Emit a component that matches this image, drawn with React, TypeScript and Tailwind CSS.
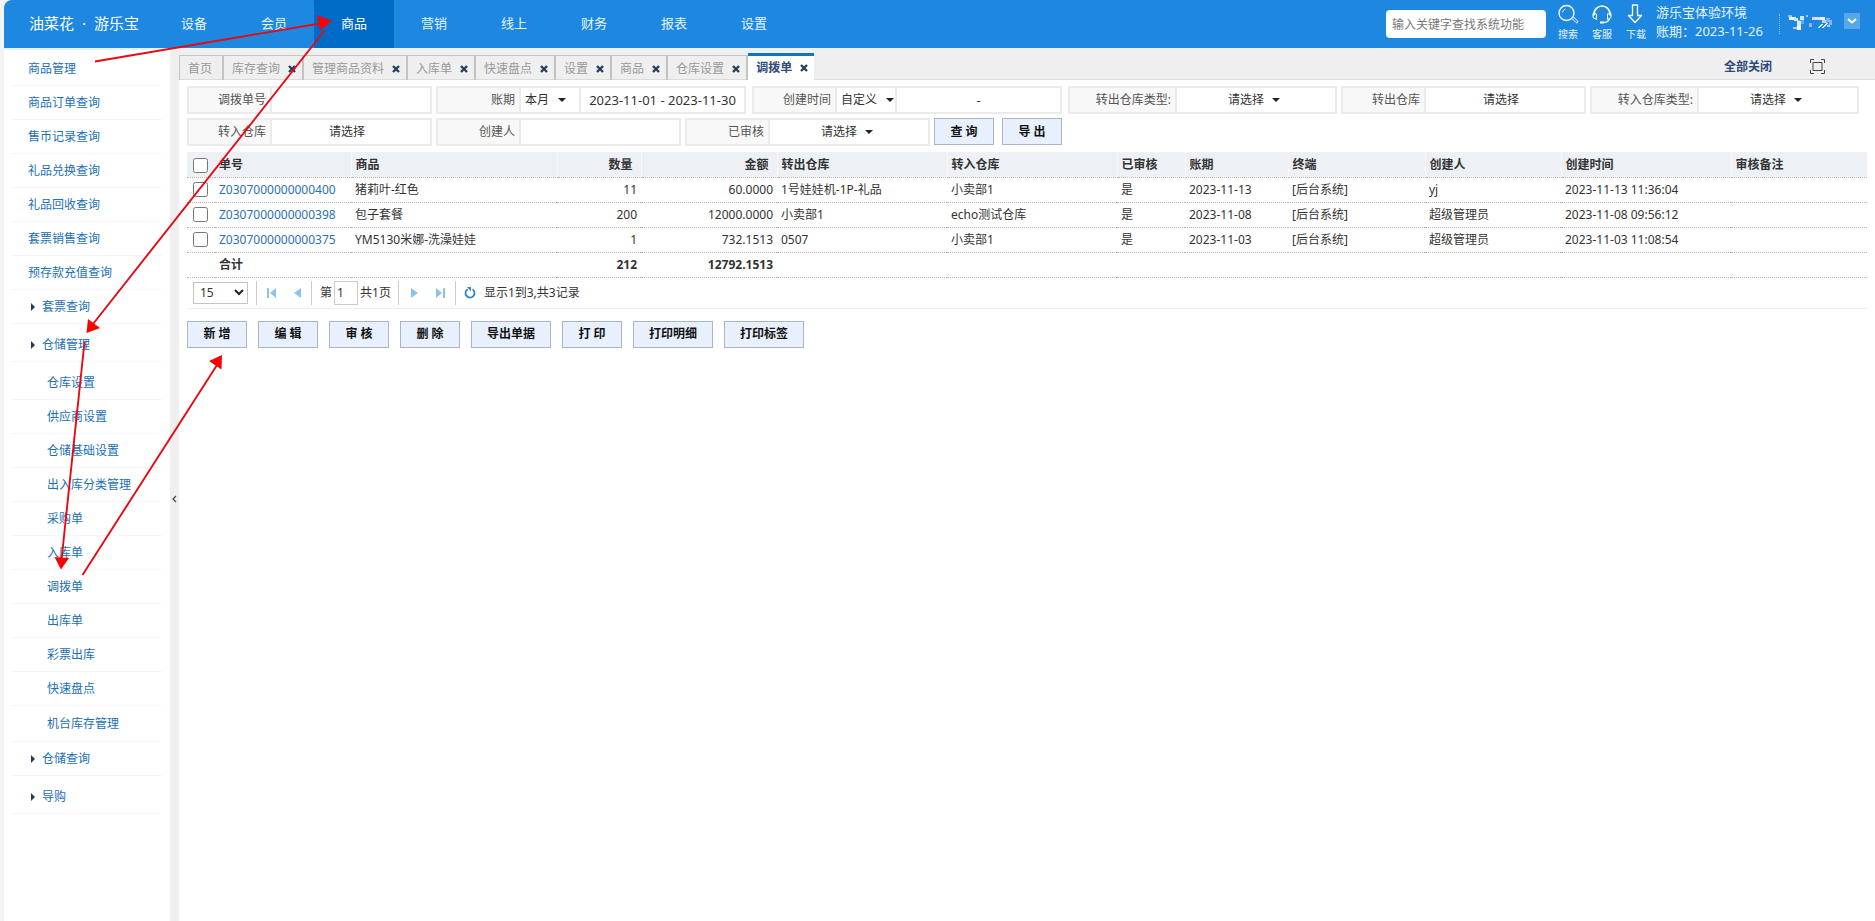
import { useState, type ReactNode } from 'react';
import { clsx } from 'clsx';

const NAV = ['设备', '会员', '商品', '营销', '线上', '财务', '报表', '设置'];

type MenuItem = { label: string; kind: 'top' | 'group' | 'child'; size?: 'tall' | 'mid' };

const MENU: MenuItem[] = [
  { label: '商品管理', kind: 'top' },
  { label: '商品订单查询', kind: 'top' },
  { label: '售币记录查询', kind: 'top' },
  { label: '礼品兑换查询', kind: 'top' },
  { label: '礼品回收查询', kind: 'top' },
  { label: '套票销售查询', kind: 'top' },
  { label: '预存款充值查询', kind: 'top' },
  { label: '套票查询', kind: 'group' },
  { label: '仓储管理', kind: 'group', size: 'tall' },
  { label: '仓库设置', kind: 'child', size: 'tall' },
  { label: '供应商设置', kind: 'child' },
  { label: '仓储基础设置', kind: 'child' },
  { label: '出入库分类管理', kind: 'child' },
  { label: '采购单', kind: 'child' },
  { label: '入库单', kind: 'child' },
  { label: '调拨单', kind: 'child' },
  { label: '出库单', kind: 'child' },
  { label: '彩票出库', kind: 'child' },
  { label: '快速盘点', kind: 'child' },
  { label: '机台库存管理', kind: 'child', size: 'mid' },
  { label: '仓储查询', kind: 'group' },
  { label: '导购', kind: 'group', size: 'tall' },
];

const TABS = ['首页', '库存查询', '管理商品资料', '入库单', '快速盘点', '设置', '商品', '仓库设置', '调拨单'];

const ROWS = [
  { id: 'Z0307000000000400', goods: '猪莉叶-红色', qty: '11', amount: '60.0000', from: '1号娃娃机-1P-礼品', to: '小卖部1', date: '2023-11-13', user: 'yj', time: '2023-11-13 11:36:04' },
  { id: 'Z0307000000000398', goods: '包子套餐', qty: '200', amount: '12000.0000', from: '小卖部1', to: 'echo测试仓库', date: '2023-11-08', user: '超级管理员', time: '2023-11-08 09:56:12' },
  { id: 'Z0307000000000375', goods: 'YM5130米娜-洗澡娃娃', qty: '1', amount: '732.1513', from: '0507', to: '小卖部1', date: '2023-11-03', user: '超级管理员', time: '2023-11-03 11:08:54' },
];

const ACTIONS = [
  { label: '新 增' },
  { label: '编 辑' },
  { label: '审 核' },
  { label: '删 除' },
  { label: '导出单据', wide: true },
  { label: '打 印' },
  { label: '打印明细', wide: true },
  { label: '打印标签', wide: true },
];

function Caret() {
  return (
    <svg width="8" height="4" viewBox="0 0 8 4" className="pointer-events-none shrink-0">
      <path d="M0 0h8L4 4z" fill="#222" />
    </svg>
  );
}

function CloseMark() {
  return (
    <svg width="8" height="8" viewBox="0 0 8 8">
      <path d="M1 1l6 6M7 1L1 7" stroke="#23415f" strokeWidth="2.4" />
    </svg>
  );
}

function Field({ id, label, wide, range, children }: { id: string; label: string; wide?: boolean; range?: boolean; children: ReactNode }) {
  return (
    <div className={clsx('flex h-7 border-2 border-[#ebebeb] bg-[#f8f8f8]', range && 'mr-0.5')}>
      <label
        htmlFor={id}
        className={clsx('flex items-center justify-end pr-1 text-[#555]', wide ? 'w-[105px]' : 'w-[81px]')}
      >
        {label}
      </label>
      {children}
    </div>
  );
}

function TextField({ id }: { id: string }) {
  return <input id={id} type="text" className="w-40 border-l-2 border-[#ebebeb] bg-white px-2 outline-none" />;
}

function SelectField({ id }: { id: string }) {
  return (
    <div className="flex w-40 items-center justify-center gap-2 border-l-2 border-[#ebebeb] bg-white pr-1">
      <select id={id} className="w-9 appearance-none outline-none">
        <option>请选择</option>
      </select>
      <Caret />
    </div>
  );
}

function PickerField({ id }: { id: string }) {
  return (
    <button id={id} type="button" className="w-40 border-l-2 border-[#ebebeb] bg-white pr-2 text-center">
      请选择
    </button>
  );
}

function RangeField({ id, preset, value }: { id: string; preset: string; value: string }) {
  return (
    <>
      <div className="flex w-[60px] items-center gap-2 border-l-2 border-[#ebebeb] bg-white pl-1">
        <select id={id} className="appearance-none outline-none">
          <option>{preset}</option>
        </select>
        <Caret />
      </div>
      <input
        type="text"
        aria-label={preset}
        defaultValue={value}
        className="w-[165px] border-l-2 border-[#ebebeb] bg-white text-center text-[13px] outline-none"
      />
    </>
  );
}

function Btn({ children, wide }: { children: ReactNode; wide?: boolean }) {
  return (
    <button
      type="button"
      className={clsx(
        'h-[27px] border border-[#a9b4c6] bg-[#e8f0fd] font-bold text-[#111]',
        wide ? 'w-20' : 'w-[60px]'
      )}
    >
      {children}
    </button>
  );
}

function HeaderTool({ label, children }: { label: string; children: ReactNode }) {
  return (
    <a href="#" className="flex w-5 flex-col items-center gap-0.5 whitespace-nowrap text-[10px] leading-4">
      <svg width="22" height="20" viewBox="0 0 22 20" fill="none" stroke="#fff" strokeWidth="1.3" className="shrink-0">
        {children}
      </svg>
      {label}
    </a>
  );
}

function Header() {
  return (
    <header className="flex h-12 items-center rounded-tl-lg bg-[#1e88e0] text-[#e4f4ff]">
      <h1 className="flex w-[150px] pb-0.5 pl-[25px] text-[15px] leading-5 whitespace-nowrap text-white">
        <span>油菜花</span>
        <span className="w-5 text-center">·</span>
        <span>游乐宝</span>
      </h1>
      <nav className="flex h-full">
        {NAV.map((item) => (
          <a
            key={item}
            href="#"
            className={clsx(
              'flex w-20 items-center justify-center pb-0.5 text-[13px]',
              item === '商品' && 'bg-[#006bc6] text-white'
            )}
          >
            {item}
          </a>
        ))}
      </nav>
      <div className="ml-auto flex items-center">
        <input
          type="search"
          aria-label="系统功能"
          placeholder="输入关键字查找系统功能"
          className="h-7 w-40 rounded-sm bg-white px-1.5 text-[#333] outline-none placeholder:text-[#777]"
        />
        <div className="ml-3 flex gap-3.5 pb-0.5">
          <HeaderTool label="搜索">
            <circle cx="9.500" cy="9" r="7.500" />
            <path d="M5.500 8.500a4 4 0 0 1 3-3.500" strokeWidth="0.8" />
            <path d="M15 14.500l1.500-1.500 4 4a1 1 0 0 1-1.500 1.500z" strokeWidth="1" />
          </HeaderTool>
          <HeaderTool label="客服">
            <path d="M3 11.500v-1.500a8 8 0 0 1 16 0v1.500" strokeWidth="1.600" />
            <path d="M2 9.500v4l3.500 2v-5.500zM20 9.500v4l-3.500 2v-5.500z" strokeWidth="1" />
            <path d="M18.500 15c-1 2-3 3.500-5.500 3.500" />
            <path d="M9 18.500h4" strokeWidth="2" />
          </HeaderTool>
          <HeaderTool label="下载">
            <path d="M7.500 1h5v10.500h4L10 18.500l-6.500-7h4z" strokeLinejoin="round" />
          </HeaderTool>
        </div>
        <div className="ml-2.5 w-[123px] pb-1 text-[13px] leading-[19px] whitespace-nowrap">
          <p>游乐宝体验环境</p>
          <p>账期：2023-11-26</p>
        </div>
        <div className="flex items-center border-l border-dotted border-[#8cc4f2]">
          <svg width="48" height="20" viewBox="0 0 48 20" className="ml-2" shapeRendering="crispEdges">
            <rect x="0" y="1" width="4" height="2" fill="#8fc4f0" />
            <rect x="1" y="3" width="7" height="3" fill="#eaf5ff" />
            <rect x="6" y="4" width="4" height="3" fill="#cfe6fb" />
            <rect x="10" y="6" width="2" height="8" fill="#7bb9ee" />
            <rect x="12" y="2" width="4" height="4" fill="#cfe6fb" />
            <rect x="9" y="7" width="4" height="6" fill="#d9ecfc" />
            <rect x="9" y="12" width="4" height="4" fill="#fff" />
            <rect x="13" y="6" width="3" height="4" fill="#63aceb" />
            <rect x="5" y="13" width="4" height="2" fill="#9fcdf4" />
            <rect x="18" y="1" width="2" height="2" fill="#9fcdf4" />
            <rect x="21" y="9" width="3" height="4" fill="#a8a8ee" />
            <rect x="24" y="3" width="8" height="3" fill="#d8dcfa" />
            <rect x="32" y="3" width="5" height="3" fill="#eef0ff" />
            <rect x="34" y="6" width="5" height="3" fill="#b9cff6" />
            <path d="M29 14l4-4h2l-4 4zM34 14l4-5h2l-4 5z" fill="#e6f3ff" />
            <rect x="38" y="4" width="4" height="4" fill="#8fa6ec" />
            <rect x="41" y="6" width="3" height="5" fill="#8fb4f0" />
            <rect x="39" y="11" width="3" height="2" fill="#a9d2f6" />
          </svg>
        </div>
        <button type="button" aria-label="账户" className="mr-[15px] mb-1.5 ml-2 flex size-4 items-center justify-center bg-[#57a7e8]">
          <svg width="10" height="6" viewBox="0 0 10 6">
            <path d="M1 1l4 3.500L9 1" fill="none" stroke="#fff" strokeWidth="1.800" />
          </svg>
        </button>
      </div>
    </header>
  );
}

function Sidebar() {
  return (
    <aside className="w-[166px] shrink-0 border-t-2 border-[#e3f1fc] bg-white px-2 pt-0.5">
      <ul>
        {MENU.map(({ label, kind, size }) => (
          <li
            key={label}
            className={clsx(
              'flex items-center border-b border-[#f4f6f8]',
              size === 'tall' ? 'h-[38px] pt-1' : size === 'mid' ? 'h-9' : 'h-[34px]',
              kind === 'top' && 'pl-4',
              kind === 'group' && 'pl-[19px]',
              kind === 'child' && 'pl-[35px]'
            )}
          >
            {kind === 'group' && (
              <svg width="4" height="8" viewBox="0 0 4 8" className="mr-[7px]">
                <path d="M0 0v8l4-4z" fill="#1d3d5c" />
              </svg>
            )}
            <a href="#" className="text-[#1a6fb5]">
              {label}
            </a>
          </li>
        ))}
      </ul>
    </aside>
  );
}

function TabBar() {
  return (
    <div className="flex h-8 items-end justify-between border-b border-[#dcdcdc] bg-[#efefef]">
      <div className="-mb-px flex items-end">
        {TABS.map((tab) => {
          const active = tab === '调拨单';
          const home = tab === '首页';
          return (
            <div
              key={tab}
              className={clsx(
                'flex items-center gap-2 pl-2',
                active
                  ? 'h-[27px] border-t-3 border-[#0f75bc] bg-white pr-1.5 font-bold text-[#2c4a7c]'
                  : 'h-[25px] border-t border-r-2 border-[#c4c4c4] pt-0.5 text-[#999]',
                home && 'border-l pr-2.5',
                !active && !home && 'pr-1.5'
              )}
            >
              <a href="#">{tab}</a>
              {!home && (
                <button type="button" aria-label={`关闭${tab}`}>
                  <CloseMark />
                </button>
              )}
            </div>
          );
        })}
      </div>
      <div className="flex items-center gap-[38px] self-center pt-1.5 pr-[50px]">
        <a href="#" className="font-bold text-[#2c4a7c]">
          全部关闭
        </a>
        <button type="button" aria-label="全屏">
          <svg width="15" height="15" viewBox="0 0 15 15" fill="none" stroke="#444">
            <path d="M.5 4V.5H4M11 .5h3.500V4M14.500 11v3.500H11M4 14.500H.5V11M3 3.500h9v8H3z" />
          </svg>
        </button>
      </div>
    </div>
  );
}

function Filters() {
  return (
    <form className="flex flex-wrap gap-1 pt-1.5">
      <Field id="no" label="调拨单号"><TextField id="no" /></Field>
      <Field id="period" label="账期" range><RangeField id="period" preset="本月" value="2023-11-01 - 2023-11-30" /></Field>
      <Field id="created" label="创建时间" range><RangeField id="created" preset="自定义" value="-" /></Field>
      <Field id="outType" label="转出仓库类型:" wide><SelectField id="outType" /></Field>
      <Field id="outStore" label="转出仓库"><PickerField id="outStore" /></Field>
      <Field id="inType" label="转入仓库类型:" wide><SelectField id="inType" /></Field>
      <Field id="inStore" label="转入仓库"><PickerField id="inStore" /></Field>
      <Field id="creator" label="创建人"><TextField id="creator" /></Field>
      <Field id="audited" label="已审核"><SelectField id="audited" /></Field>
      <div className="flex gap-2">
        <Btn>查 询</Btn>
        <Btn>导 出</Btn>
      </div>
    </form>
  );
}

function OrderTable() {
  const [picked, setPicked] = useState<string[]>([]);
  const toggle = (id: string) =>
    setPicked((p) => (p.includes(id) ? p.filter((x) => x !== id) : [...p, id]));

  return (
    <table className="mt-1.5 w-full table-fixed whitespace-nowrap [&_td]:h-[25px] [&_td]:border-b [&_td]:border-dotted [&_td]:border-[#b5b5b5] [&_td]:px-1 [&_th]:h-[25px] [&_th]:border-b [&_th]:border-dotted [&_th]:border-b-[#b5b5b5] [&_th]:px-1 [&_th]:pt-0.5 [&_th]:text-left">
      <colgroup>
        <col className="w-7" />
        <col className="w-[136px]" />
        <col className="w-[206px]" />
        <col className="w-[84px]" />
        <col className="w-[136px]" />
        <col className="w-[170px]" />
        <col className="w-[170px]" />
        <col className="w-[68px]" />
        <col className="w-[103px]" />
        <col className="w-[137px]" />
        <col className="w-[136px]" />
        <col className="w-[170px]" />
        <col />
      </colgroup>
      <thead className="bg-[#edf1f6]">
        <tr>
          <th>
            <input
              type="checkbox"
              aria-label="全选"
              checked={picked.length === ROWS.length}
              onChange={(e) => setPicked(e.target.checked ? ROWS.map((r) => r.id) : [])}
              className="ml-0.5 block size-[15px]"
            />
          </th>
          <th>单号</th>
          <th className="border-l border-l-white">商品</th>
          <th className="border-l border-l-white"><div className="pr-1 text-right">数量</div></th>
          <th className="border-l border-l-white"><div className="pr-1 text-right">金额</div></th>
          <th className="border-l border-l-white">转出仓库</th>
          <th className="border-l border-l-white">转入仓库</th>
          <th className="border-l border-l-white">已审核</th>
          <th className="border-l border-l-white">账期</th>
          <th className="border-l border-l-white">终端</th>
          <th className="border-l border-l-white">创建人</th>
          <th className="border-l border-l-white">创建时间</th>
          <th className="border-l border-l-white">审核备注</th>
        </tr>
      </thead>
      <tbody>
        {ROWS.map((r) => (
          <tr key={r.id}>
            <td>
              <input
                type="checkbox"
                aria-label={r.id}
                checked={picked.includes(r.id)}
                onChange={() => toggle(r.id)}
                className="ml-0.5 block size-[15px]"
              />
            </td>
            <td><a href="#" className="text-[#2d6fb3]">{r.id}</a></td>
            <td>{r.goods}</td>
            <td className="text-right">{r.qty}</td>
            <td className="text-right">{r.amount}</td>
            <td>{r.from}</td>
            <td>{r.to}</td>
            <td>是</td>
            <td>{r.date}</td>
            <td>[后台系统]</td>
            <td>{r.user}</td>
            <td>{r.time}</td>
            <td />
          </tr>
        ))}
      </tbody>
      <tfoot className="font-bold">
        <tr>
          <td />
          <td>合计</td>
          <td />
          <td className="text-right">212</td>
          <td className="text-right">12792.1513</td>
          <td colSpan={8} />
        </tr>
      </tfoot>
    </table>
  );
}

function Divider() {
  return <span className="h-6 w-px bg-[#ccc]" />;
}

function Pager() {
  return (
    <div className="flex h-[31px] items-center border-b border-[#eee] pl-1.5">
      <div className="relative mr-2 flex items-center">
        <select aria-label="每页条数" className="h-[22px] w-[55px] appearance-none border border-[#c4c4c4] pl-1.5 outline-none">
          <option>15</option>
        </select>
        <svg width="10" height="7" viewBox="0 0 10 7" className="pointer-events-none absolute right-1">
          <path d="M1 1l4 4 4-4" fill="none" stroke="#222" strokeWidth="2" />
        </svg>
      </div>
      <Divider />
      <button type="button" aria-label="首页" className="ml-2.5">
        <svg width="9" height="10" viewBox="0 0 9 10" fill="#8cc3ee"><path d="M0 0h2v10H0zM9 0v10L3 5z" /></svg>
      </button>
      <button type="button" aria-label="上一页" className="mr-2.5 ml-[18px]">
        <svg width="7" height="10" viewBox="0 0 7 10" fill="#8cc3ee"><path d="M7 0v10L0 5z" /></svg>
      </button>
      <Divider />
      <label htmlFor="page" className="mr-0.5 ml-2">第</label>
      <input id="page" type="text" defaultValue="1" className="mr-0.5 h-6 w-6 border border-[#ccc] pl-0.5 outline-none" />
      <span className="mr-[7px]">共1页</span>
      <Divider />
      <button type="button" aria-label="下一页" className="ml-3">
        <svg width="7" height="10" viewBox="0 0 7 10" fill="#8cc3ee"><path d="M0 0v10l7-5z" /></svg>
      </button>
      <button type="button" aria-label="末页" className="mr-2.5 ml-[18px]">
        <svg width="9" height="10" viewBox="0 0 9 10" fill="#8cc3ee"><path d="M7 0h2v10H7zM0 0v10l6-5z" /></svg>
      </button>
      <Divider />
      <button type="button" aria-label="刷新" className="mx-2">
        <svg width="12" height="12" viewBox="0 0 12 12">
          <path d="M8.500 2.300A4.500 4.500 0 1 1 3.700 2.200" fill="none" stroke="#2f86c9" strokeWidth="1.800" />
          <path d="M3 0h4v4.500z" fill="#2f86c9" />
        </svg>
      </button>
      <span>显示1到3,共3记录</span>
    </div>
  );
}

/** Guide arrows drawn over the page: 商品管理 → 商品 → 仓储管理 → 调拨单 → 新增 */
function GuideArrows() {
  return (
    <svg
      width="340"
      height="600"
      viewBox="0 0 340 600"
      className="pointer-events-none absolute top-0 left-0"
      stroke="#e60a12"
      strokeWidth="1.900"
      fill="#f00"
    >
      <path d="M95 61.500L320 23.500M325 30L93 324M84.500 342L61.500 560M82.500 575L217 365" fill="none" />
      <g stroke="none">
        <path d="M317 15l15 6-12 9.500z" />
        <path d="M88 319l12 9-13.500 5z" />
        <path d="M54.500 557l14.500 1-8 11.500z" />
        <path d="M209 361l13-6-.5 14.500z" />
      </g>
    </svg>
  );
}

export default function App() {
  return (
    <div className="relative flex min-h-screen flex-col bg-[#f3f3f3] pl-1 font-['Noto_Sans','Noto_Sans_CJK_SC',sans-serif] text-[12px] leading-4 text-[#333]">
      <Header />
      <div className="flex flex-1">
        <Sidebar />
        <div className="flex w-[9px] shrink-0 items-center justify-center bg-[#efefef] pt-7">
          <button type="button" aria-label="收起菜单">
            <svg width="5" height="8" viewBox="0 0 5 8">
              <path d="M4 1L1 4l3 3" fill="none" stroke="#444" strokeWidth="1.200" />
            </svg>
          </button>
        </div>
        <main className="min-w-0 flex-1 bg-white">
          <TabBar />
          <div className="px-2">
            <Filters />
            <OrderTable />
            <Pager />
            <div className="flex flex-wrap gap-[11px] pt-3">
              {ACTIONS.map((a) => (
                <Btn key={a.label} wide={a.wide}>
                  {a.label}
                </Btn>
              ))}
            </div>
          </div>
        </main>
      </div>
      <GuideArrows />
    </div>
  );
}
